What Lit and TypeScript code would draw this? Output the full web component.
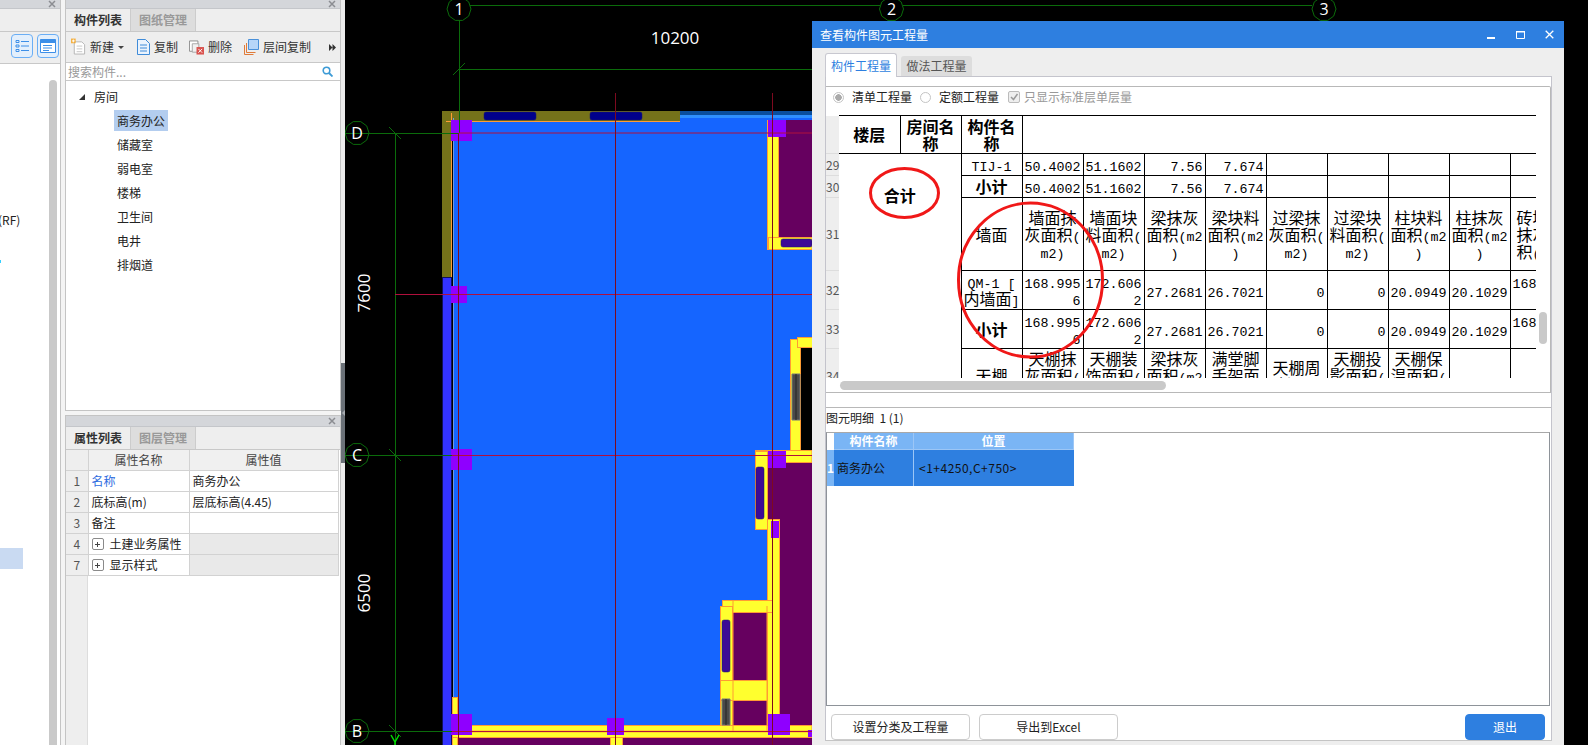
import { LitElement, css, html, svg } from 'lit';
import { customElement } from 'lit/decorators.js';

// ascii runs get the narrow mono face, the way the old grid control draws them
const mixed = (s: string) =>
  s.split(/([\x20-\x7e]+)/).map((p, i) => (i % 2 ? html`<span class="a">${p}</span>` : p));

type Row = { no: number; h: number; cells: string[]; bold?: boolean };

const ROWS: Row[] = [
  { no: 29, h: 22, cells: ['TIJ-1', '50.4002', '51.1602', '7.56', '7.674', '', '', '', '', ''] },
  { no: 30, h: 22, bold: true, cells: ['小计', '50.4002', '51.1602', '7.56', '7.674', '', '', '', '', ''] },
  { no: 31, h: 73, cells: ['墙面', '墙面抹灰面积(m2)', '墙面块料面积(m2)', '梁抹灰面积(m2)', '梁块料面积(m2)', '过梁抹灰面积(m2)', '过梁块料面积(m2)', '柱块料面积(m2)', '柱抹灰面积(m2)', '砖墙面抹灰面积(m2)'] },
  { no: 32, h: 39, cells: ['QM-1 [内墙面]', '168.9956', '172.6062', '27.2681', '26.7021', '0', '0', '20.0949', '20.1029', '168.9956'] },
  { no: 33, h: 39, bold: true, cells: ['小计', '168.9956', '172.6062', '27.2681', '26.7021', '0', '0', '20.0949', '20.1029', '168.9956'] },
  { no: 34, h: 54, cells: ['天棚', '天棚抹灰面积(m2)', '天棚装饰面积(m2)', '梁抹灰面积(m2)', '满堂脚手架面积(m2)', '天棚周长(m)', '天棚投影面积(m2)', '天棚保温面积(m2)', '', ''] },
];

const ATTRS = [
  { no: 1, name: '名称', value: '商务办公', blue: true },
  { no: 2, name: '底标高(m)', value: '层底标高(4.45)' },
  { no: 3, name: '备注', value: '' },
  { no: 4, name: '土建业务属性', value: '', group: true },
  { no: 7, name: '显示样式', value: '', group: true },
];

const TREE = ['商务办公', '储藏室', '弱电室', '楼梯', '卫生间', '电井', '排烟道'];

// x, y, w, h, fill for the plan drawing
const PURPLE = '#66005f';
const YELLOW = '#ffff2e';
const ORANGE = '#ff9c33';
const COLUMN = '#8f00ff';
const WINDOW = '#3c0a96';

const FILLS: [number, number, number, number, string][] = [
  [453, 118, 359, 607, '#1565ff'],
  [778, 120, 34, 117, PURPLE],
  [767, 462, 45, 58, PURPLE],
  [779, 520, 33, 205, PURPLE],
  [800, 347, 12, 103, '#000'],
  [732, 612, 35, 68, PURPLE],
  [732, 700, 35, 25, PURPLE],
  [457, 737, 153, 8, PURPLE],
  [622, 737, 190, 8, PURPLE],
  [442, 111, 10, 166, '#75721a'],
  [442, 111, 238, 11, '#75721a'],
  [680, 111, 132, 4, '#0a4e9e'],
  [680, 115, 132, 3, '#2f8fff'],
  [451, 113, 1, 164, ORANGE],
  [446, 121, 234, 1, ORANGE],
  [442, 277, 10, 468, '#10105c'],
  [443, 278, 8, 467, '#3333ff'],
  [453, 118, 1, 600, '#6f9be0'],
];

const WALLS: [number, number, number, number][] = [
  [767.5, 120.5, 11, 129],
  [768.5, 237.5, 43.5, 12],
  [790.5, 339.5, 10, 111],
  [797.5, 337.5, 15, 10],
  [755.5, 450.5, 56.5, 12],
  [755.5, 451.5, 12, 78],
  [767.5, 519.5, 12, 212],
  [722.5, 600.5, 50, 12],
  [720.5, 606.5, 12, 125],
  [720.5, 680.5, 47, 20],
  [452.5, 725.5, 359.5, 12],
  [452.5, 697.5, 5, 28],
  [452.5, 737.5, 5, 8],
  [610.5, 737.5, 12, 8],
];

const DARK: [number, number, number, number, string][] = [
  [484, 112, 52, 8, '#00008b'],
  [590, 112, 52, 8, '#00008b'],
  [781, 239, 31, 8, WINDOW],
  [756, 467, 8, 52, WINDOW],
  [722, 620, 8, 52, WINDOW],
];

const COLUMNS: [number, number, number, number][] = [
  [451, 120, 21, 21],
  [768, 120, 18, 17],
  [451, 286, 16, 17],
  [451, 449, 21, 21],
  [768, 451, 18, 17],
  [771, 521, 8, 17],
  [451, 714, 21, 21],
  [607, 718, 17, 17],
  [768, 714, 22, 21],
  [808, 730, 4, 7],
];

const AXES = [
  { x: 459, y: 9, t: '1' },
  { x: 891.5, y: 9, t: '2' },
  { x: 1324, y: 9, t: '3' },
  { x: 357, y: 133, t: 'D' },
  { x: 357, y: 455, t: 'C' },
  { x: 357, y: 731, t: 'B' },
];

const octagon = (cx: number, cy: number, r: number) =>
  Array.from({ length: 10 }, (_, i) => {
    const a = (Math.PI * 2 * i) / 10;
    return `${(cx + r * Math.cos(a)).toFixed(1)},${(cy + r * Math.sin(a)).toFixed(1)}`;
  }).join(' ');

const closeIcon = html`<svg class="x" width="8" height="8" viewBox="0 0 8 8"><path d="M1 1l6 6M7 1L1 7" stroke="#8b8d92" stroke-width="1.5" fill="none"/></svg>`;

const iconNew = html`<svg width="15" height="18" viewBox="0 0 16 18"><path d="M3.5 3.5h8l3 3v10h-11z" fill="#fff" stroke="#b4b4b4"/><path d="M6 8h6M6 11h6M6 14h6" stroke="#c4c4c4"/><path d="M0 0h5v5H0z" fill="#f5a623" opacity=".85"/><path d="M1 2.5h3M2.5 1v3" stroke="#fff"/></svg>`;
const iconCopy = html`<svg width="14" height="16" viewBox="0 0 14 16"><path d="M1.5.5h8l4 4v11h-12z" fill="#eaf3fd" stroke="#3f8bd8"/><path d="M4 6h7M4 9h7M4 12h7" stroke="#3f8bd8"/></svg>`;
const iconDelete = html`<svg width="15" height="15" viewBox="0 0 16 15"><path d="M.5.5h9v11H.5z" fill="#fff" stroke="#8d8d8d"/><path d="M3.5 3.5h7v9h-7z" fill="#f1f1f1" stroke="#a5a5a5"/><path d="M8 7h8v8H8z" fill="#d9534f"/><path d="M10 9l4 4M14 9l-4 4" stroke="#fff"/></svg>`;
const iconFloors = html`<svg width="15" height="16" viewBox="0 0 15 16"><path d="M.5 6v9.5h9M2.500 4v9.500h9" fill="none" stroke="#e07b39"/><path d="M4.500.5h10v10h-10z" fill="#b6d5f8" stroke="#4a90d9"/></svg>`;
const iconSearch = html`<svg width="11" height="11" viewBox="0 0 11 11"><circle cx="4.500" cy="4.500" r="3.300" fill="none" stroke="#3d9bd6" stroke-width="1.600"/><path d="M7 7l3.500 3.500" stroke="#3d9bd6" stroke-width="1.800"/></svg>`;

@customElement('app-root')
export class AppRoot extends LitElement {
  static styles = css`
    :host {
      display: flex;
      position: relative;
      width: 1588px;
      height: 745px;
      overflow: hidden;
      background: #f4f4f4;
      font: 12px/16px "Noto Sans CJK SC", sans-serif;
      color: #222;
    }

    /* left stub panel, cut by the window edge */
    .left {
      width: 61px;
      flex: none;
      box-sizing: border-box;
      border-right: 1px solid #c4c4c4;
      background: #fff;
      display: flex;
      flex-direction: column;
    }
    .title {
      height: 8px;
      flex: none;
      background: #d4d6da;
      border-bottom: 1px solid #c4c6ca;
      display: flex;
      justify-content: flex-end;
      align-items: center;
      padding-right: 4px;
    }
    .left .strip {
      height: 22px;
      background: #eee;
      border-bottom: 1px solid #c8c8c8;
    }
    .left .tools {
      height: 29px;
      background: #eee;
      border-bottom: 1px solid #c8c8c8;
      display: flex;
      gap: 4px;
      padding: 2px 0 0 11px;
      box-sizing: content-box;
    }
    .viewbtn {
      width: 20px;
      height: 22px;
      border: 1px solid #6aaef5;
      border-radius: 4px;
      background: #e3effc;
      display: flex;
      align-items: center;
      justify-content: center;
    }
    .left .body {
      flex: 1;
      position: relative;
      display: flex;
      min-height: 0;
    }
    .left .content {
      width: 49px;
      overflow: hidden;
    }
    .rf {
      margin: 148px 0 0 -2px;
      white-space: nowrap;
    }
    .mark {
      width: 1px;
      height: 3px;
      margin-top: 32px;
      background: #35d0ff;
    }
    .picked {
      width: 23px;
      height: 21px;
      margin-top: 285px;
      background: #c9daf2;
    }
    .left .thumb {
      width: 8px;
      margin-top: 16px;
      background: #c9c9c9;
      border-radius: 4px 4px 0 0;
    }

    .mid {
      width: 276px;
      flex: none;
      margin-left: 4px;
      display: flex;
      flex-direction: column;
      gap: 4px;
    }
    .panel {
      box-sizing: border-box;
      border: 1px solid #c4c4c4;
      border-top: none;
      background: #fff;
      display: flex;
      flex-direction: column;
      min-height: 0;
    }
    .panel.list {
      height: 411px;
    }
    .panel.attrs {
      flex: 1;
      border-top: 1px solid #c4c4c4;
      border-bottom: none;
    }
    .panel.attrs .title {
      height: 10px;
    }
    .tabs {
      height: 22px;
      flex: none;
      display: flex;
      background: #eee;
      border-bottom: 1px solid #c8c8c8;
    }
    .tab {
      width: 64px;
      display: flex;
      align-items: center;
      justify-content: center;
      font-weight: 700;
      color: #333;
    }
    .tab.off {
      width: 64px;
      background: #ddd;
      color: #999;
      border: 1px solid #ccc;
      border-width: 0 1px;
    }
    .toolbar {
      height: 30px;
      flex: none;
      display: flex;
      align-items: center;
      background: #eee;
      border-bottom: 1px solid #c8c8c8;
      padding-left: 5px;
      color: #333;
    }
    .tool {
      display: flex;
      align-items: center;
      gap: 4px;
      margin-right: 11px;
      white-space: nowrap;
    }
    .tool.wide {
      margin-right: 12px;
    }
    .caret {
      width: 0;
      height: 0;
      border: 3px solid transparent;
      border-top: 3px solid #444;
      border-bottom: none;
    }
    .more {
      margin-left: auto;
      margin-right: 4px;
      display: flex;
    }
    .search {
      height: 17px;
      flex: none;
      display: flex;
      align-items: center;
      justify-content: space-between;
      padding: 0 7px 0 2px;
      color: #999;
      border-bottom: 1px solid #c8c8c8;
    }
    .tree {
      padding: 3px 0 0 13px;
    }
    .tree .root {
      display: flex;
      align-items: center;
      gap: 9px;
      height: 22px;
      padding-top: 2px;
      color: #222;
    }
    .tree .tri {
      width: 0;
      height: 0;
      border-bottom: 6px solid #333;
      border-left: 6px solid transparent;
    }
    .tree .item {
      height: 24px;
      display: flex;
      align-items: center;
      margin-left: 35px;
    }
    .tree .item span {
      padding: 2px 3px;
      line-height: 17px;
    }
    .tree .item.sel span {
      background: #b3cdef;
    }

    .attr-body {
      flex: 1;
      display: flex;
      flex-direction: column;
      min-height: 0;
    }
    .attr-table {
      border-collapse: collapse;
      table-layout: fixed;
      width: 272px;
      color: #222;
    }
    .attr-table th,
    .attr-table td {
      height: 20px;
      padding: 0 3px;
      border: 1px solid #d2d2d2;
      font-weight: 400;
      white-space: nowrap;
      overflow: hidden;
    }
    .attr-table th {
      background: #f0f0f0;
      color: #444;
      text-align: center;
      border-top: none;
    }
    .attr-table .no {
      background: #eee;
      color: #555;
      text-align: center;
      border-left: none;
    }
    .attr-table .blue {
      color: #2e6ce0;
    }
    .attr-table .grey {
      background: #e9e9e9;
    }
    .group {
      display: flex;
      align-items: center;
      gap: 6px;
    }
    .plus {
      width: 10px;
      height: 10px;
      flex: none;
      border: 1px solid #8a8a8a;
      border-radius: 2px;
      background: linear-gradient(#444, #444) center / 5px 1px no-repeat,
        linear-gradient(#444, #444) center / 1px 5px no-repeat;
    }
    .attr-stub {
      flex: 1;
      width: 21px;
      background: #eee;
      border-right: 1px solid #ddd;
    }

    .splitter {
      width: 4px;
      flex: none;
      background: #ececec;
    }
    .handle {
      height: 100px;
      margin-top: 363px;
      background: #6b7178;
      display: flex;
      align-items: center;
      justify-content: center;
    }
    .handle i {
      width: 0;
      height: 0;
      border: 3px solid transparent;
      border-right: 3px solid #a7abb0;
      border-left: none;
    }

    .canvas {
      flex: 1;
      background: #000;
      min-width: 0;
    }
    .canvas svg {
      display: block;
    }
    .canvas text {
      fill: #fff;
      font-family: "Open Sans", sans-serif;
    }

    /* floating dialog */
    .dialog {
      position: absolute;
      left: 812px;
      top: 21px;
      width: 752px;
      height: 724px;
      background: #eee;
      display: flex;
      flex-direction: column;
    }
    .dlg-title {
      height: 27px;
      flex: none;
      background: #2e7fe0;
      color: #fff;
      display: flex;
      align-items: center;
      padding: 0 10px 0 8px;
    }
    .dlg-title .win {
      margin-left: auto;
      display: flex;
      gap: 20px;
    }
    .dlg-tabs {
      height: 28px;
      flex: none;
      display: flex;
      align-items: flex-end;
      gap: 4px;
      padding-left: 13px;
      position: relative;
      z-index: 1;
    }
    .dlg-tab {
      width: 72px;
      height: 24px;
      box-sizing: border-box;
      background: #fff;
      border: 1px solid #c8c8d0;
      border-bottom: none;
      border-radius: 3px 3px 0 0;
      color: #2e7fe0;
      display: flex;
      align-items: center;
      justify-content: center;
      margin-bottom: -1px;
    }
    .dlg-tab.off {
      width: 71px;
      height: 20px;
      background: #ddd;
      border: none;
      color: #555;
      margin-bottom: 0;
    }
    .pane {
      height: 665px;
      box-sizing: border-box;
      margin: 0 12px 0 13px;
      background: #fff;
      border: 1px solid #c4c4cc;
      border-bottom: 1px solid #c4c4c4;
      padding: 9px 0 0;
      display: flex;
      flex-direction: column;
    }
    .frame {
      height: 307px;
      flex: none;
      box-sizing: border-box;
      border: 1px solid #b8b8b8;
      border-width: 1px 1px 1px 0;
      border-radius: 0 2px 0 0;
      position: relative;
    }
    .options {
      height: 20px;
      margin-bottom: 8px;
      display: flex;
      align-items: center;
      padding-left: 7px;
    }
    .radio {
      width: 11px;
      height: 11px;
      box-sizing: border-box;
      border: 1px solid #c4c4c4;
      border-radius: 50%;
      background: #fff;
      margin-right: 8px;
    }
    .radio.on {
      background: radial-gradient(circle, #aaa 0 3px, #fff 3.500px);
    }
    .opt {
      margin-right: 8px;
    }
    .check {
      width: 12px;
      height: 12px;
      box-sizing: border-box;
      border: 1px solid #bbb;
      border-radius: 2px;
      background: #eee;
      margin: 0 4px 0 1px;
      display: flex;
    }
    .opt.dim {
      color: #999;
    }
    .sheet-clip {
      width: 710px;
      height: 263px;
      overflow: hidden;
    }
    .sheet {
      border-collapse: collapse;
      table-layout: fixed;
      width: 745px;
      color: #000;
      font-size: 16px;
      line-height: 17px;
    }
    .sheet td {
      border: 1px solid #000;
      padding: 0 2px;
      word-break: break-all;
      line-break: anywhere;
      text-align: center;
      vertical-align: middle;
      overflow: hidden;
    }
    /* small line-height so the mono runs don't push the 17px line boxes apart */
    .sheet .a {
      font: 13.333px/10px "Liberation Mono", monospace;
      white-space: pre-wrap;
    }
    .sheet td.num {
      text-align: right;
    }
    .sheet td.b {
      font-weight: 700;
    }
    .sheet td.first {
      border-left: none;
    }
    .sheet td.total {
      vertical-align: top;
      padding-top: 33px;
      font-weight: 700;
      border-left: none;
    }
    .sheet td.rn {
      padding: 0;
      border: none;
      border-bottom: 1px solid #ddd;
      background: #eee;
      font: 12px/16px "Noto Sans CJK SC", sans-serif;
      color: #555;
      white-space: nowrap;
      word-break: normal;
      text-align: left;
      overflow: visible;
    }
    .hbar {
      position: absolute;
      left: 14px;
      top: 294px;
      width: 326px;
      height: 9px;
      border-radius: 5px;
      background: #c9c9c9;
    }
    .vbar {
      position: absolute;
      left: 713px;
      top: 225px;
      width: 8px;
      height: 32px;
      border-radius: 4px;
      background: #c9c9c9;
    }
    .rings {
      position: absolute;
      left: 0;
      top: 0;
      pointer-events: none;
    }
    .detail {
      flex: 1;
      margin-top: 14px;
      display: flex;
      flex-direction: column;
      border-top: 1px solid #b8b8b8;
      min-height: 0;
    }
    .detail .cap {
      height: 19px;
      padding-bottom: 5px;
      flex: none;
      display: flex;
      align-items: center;
      color: #222;
    }
    .detail .box {
      flex: 1;
      margin-right: 1px;
      border: 1px solid #8e9399;
      border-top-color: #a8a8a8;
    }
    .items {
      display: grid;
      grid-template-columns: 7px 80px 160px;
      grid-template-rows: 17px 36px;
      width: 247px;
      gap: 0;
    }
    .items div {
      display: flex;
      align-items: center;
      box-sizing: border-box;
      border-right: 1px solid #9cc6f6;
    }
    .items .head {
      background: #7ab5f5;
      color: #fff;
      font-weight: 700;
      justify-content: center;
      border-bottom: 1px solid #9cc6f6;
    }
    .items .corner {
      background: #fff;
      border-right: none;
    }
    .items .rownum {
      background: #7ab5f5;
      color: #fff;
      font-weight: 700;
      justify-content: center;
      border-right: none;
    }
    .items .cell {
      background: #2e7fe0;
      color: #111;
      padding-left: 3px;
    }
    .items .cell.pos {
      padding-left: 5px;
      letter-spacing: 0.5px;
      border-right: none;
    }
    .actions {
      height: 34px;
      flex: none;
      box-sizing: border-box;
      padding: 8px 6px 0 5px;
      display: flex;
      gap: 9px;
    }
    .btn {
      width: 139px;
      box-sizing: border-box;
      border: 1px solid #ccc;
      border-radius: 4px;
      background: #fff;
      color: #222;
      display: flex;
      align-items: center;
      justify-content: center;
    }
    .btn.primary {
      width: 80px;
      margin-left: auto;
      background: #2e7fe0;
      border-color: #2e7fe0;
      color: #fff;
    }
  `;

  private renderLeft() {
    return html`
      <div class="left">
        <div class="title">${closeIcon}</div>
        <div class="strip"></div>
        <div class="tools">
          <div class="viewbtn">
            <svg width="14" height="14" viewBox="0 0 14 14"><path d="M1 1.500h3v2H1zM1 6h3v2H1zM1 10.500h3v2H1z" fill="none" stroke="#3d8fe8"/><path d="M6 2.500h8M6 7h8M6 11.500h8" stroke="#3d8fe8"/></svg>
          </div>
          <div class="viewbtn">
            <svg width="16" height="14" viewBox="0 0 16 14"><path d="M.5.5h15v13H.5z" fill="#fff" stroke="#3d8fe8"/><path d="M.5.500h15v3.500H.5z" fill="#3d8fe8"/><path d="M3 6.500h9M3 9h9M3 11.500h6" stroke="#3d8fe8"/></svg>
          </div>
        </div>
        <div class="body">
          <div class="content">
            <div class="rf">(RF)</div>
            <div class="mark"></div>
            <div class="picked"></div>
          </div>
          <div class="thumb"></div>
        </div>
      </div>
    `;
  }

  private renderList() {
    return html`
      <section class="panel list">
        <div class="title">${closeIcon}</div>
        <div class="tabs"><div class="tab">构件列表</div><div class="tab off">图纸管理</div></div>
        <div class="toolbar">
          <div class="tool wide">${iconNew}<span>新建</span><i class="caret"></i></div>
          <div class="tool">${iconCopy}<span>复制</span></div>
          <div class="tool wide">${iconDelete}<span>删除</span></div>
          <div class="tool">${iconFloors}<span>层间复制</span></div>
          <span class="more">
            <svg width="7" height="7" viewBox="0 0 7 7"><path d="M0 0l3.500 3.500L0 7zM3.500 0L7 3.500 3.500 7z" fill="#333"/></svg>
          </span>
        </div>
        <div class="search"><span>搜索构件...</span>${iconSearch}</div>
        <div class="tree">
          <div class="root"><i class="tri"></i><span>房间</span></div>
          ${TREE.map((t, i) => html`<div class="item ${i === 0 ? 'sel' : ''}"><span>${t}</span></div>`)}
        </div>
      </section>
    `;
  }

  private renderAttrs() {
    return html`
      <section class="panel attrs">
        <div class="title">${closeIcon}</div>
        <div class="tabs"><div class="tab">属性列表</div><div class="tab off">图层管理</div></div>
        <div class="attr-body">
          <table class="attr-table">
            <colgroup><col width="22" /><col width="101" /><col width="149" /></colgroup>
            <tr><th class="no"></th><th>属性名称</th><th>属性值</th></tr>
            ${ATTRS.map(
              (a) => html`
                <tr>
                  <td class="no">${a.no}</td>
                  <td class=${a.blue ? 'blue' : ''}>
                    ${a.group
                      ? html`<div class="group"><i class="plus"></i><span>${a.name}</span></div>`
                      : a.name}
                  </td>
                  <td class=${a.group ? 'grey' : ''}>${a.value}</td>
                </tr>
              `
            )}
          </table>
          <div class="attr-stub"></div>
        </div>
      </section>
    `;
  }

  private renderPlan() {
    const green = '#0b6b0b';
    return html`
      <div class="canvas">
        <svg width="1243" height="745" viewBox="345 0 1243 745">
          ${FILLS.map(([x, y, w, h, f]) => svg`<rect x=${x} y=${y} width=${w} height=${h} fill=${f}></rect>`)}
          ${WALLS.map(([x, y, w, h]) => svg`<rect x=${x} y=${y} width=${w} height=${h} fill=${YELLOW} stroke=${ORANGE}></rect>`)}
          <path d="M453 731.500H812" stroke="#ff6a1e" stroke-width="1.500" fill="none" />
          <path d="M733 600v131M767 606v125" stroke=${ORANGE} fill="none" />
          ${DARK.map(([x, y, w, h, f]) => svg`<rect x=${x} y=${y} width=${w} height=${h} rx="2" fill=${f} stroke="#1a1a6a" stroke-width=".5"></rect>`)}
          <path d="M792 374h8v46h-8zM722 699h8v26h-8z" fill="#4a4a4a" stroke="#777" />
          <path d="M796 374v46M726 699v26" stroke="#222" />
          ${COLUMNS.map(([x, y, w, h]) => svg`<rect x=${x} y=${y} width=${w} height=${h} fill=${COLUMN}></rect>`)}

          <path d="M459.500 20V133M470 5.500H880M903 5.500H1312M459 69.500H812M345 133.500H459M345 455.500H452M345 731.500H452M395.500 133V745" stroke=${green} fill="none" />
          <path d="M453 75l12-12M389 127l12 12M389 449l12 12M389 725l12 12" stroke=${green} fill="none" />
          <path d="M391 735l4 7 4-7M395 742v3" stroke="#00e000" stroke-width="1.500" fill="none" />
          <path d="M459 133H812M395 294.500H812M452 455.500H812M452 731.500H812" stroke="#b0103c" fill="none" />
          <path d="M458.500 133V745M615.500 93V745M772.500 93V745" stroke="#7d0a1f" fill="none" />

          ${AXES.map(
            (a) => svg`
              <polygon points=${octagon(a.x, a.y, 12)} fill="none" stroke=${green}></polygon>
              <text x=${a.x} y=${a.y + 6} font-size="16" text-anchor="middle">${a.t}</text>
            `
          )}
          <text x="675" y="44" font-size="17" text-anchor="middle">10200</text>
          <text transform="translate(370 293) rotate(-90)" font-size="17" text-anchor="middle">7600</text>
          <text transform="translate(370 593) rotate(-90)" font-size="17" text-anchor="middle">6500</text>
        </svg>
      </div>
    `;
  }

  private renderSheet() {
    return html`
      <table class="sheet">
        <colgroup>
          <col width="13" />
          ${Array.from({ length: 12 }, () => html`<col width="61" />`)}
        </colgroup>
        <tr style="height:38px">
          <td class="rn"></td>
          <td class="b first">楼层</td>
          <td class="b">房间名称</td>
          <td class="b">构件名称</td>
          <td colspan="9"></td>
        </tr>
        ${ROWS.map(
          (r, i) => html`
            <tr style="height:${r.h}px">
              <td class="rn">${r.no}</td>
              ${i === 0 ? html`<td class="total" colspan="2" rowspan="6">合计</td>` : ''}
              ${r.cells.map((c, j) => {
                const isNum = /^[\d.]+$/.test(c);
                return html`<td class="${isNum ? 'num' : ''} ${r.bold && j === 0 ? 'b' : ''}">${mixed(c)}</td>`;
              })}
            </tr>
          `
        )}
      </table>
    `;
  }

  private renderDialog() {
    return html`
      <div class="dialog">
        <div class="dlg-title">
          <span>查看构件图元工程量</span>
          <div class="win">
            <svg width="9" height="9" viewBox="0 0 9 9"><path d="M0 7h8v2H0z" fill="#fff"/></svg>
            <svg width="9" height="9" viewBox="0 0 9 9"><path d="M.5 1.500h8v7h-8z" fill="none" stroke="#fff"/><path d="M0 1h9v1.500H0z" fill="#fff"/></svg>
            <svg width="9" height="9" viewBox="0 0 9 9"><path d="M.7.700l7.600 7.600M8.300.700L.7 8.300" stroke="#fff" stroke-width="1.300" fill="none"/></svg>
          </div>
        </div>
        <div class="dlg-tabs">
          <div class="dlg-tab">构件工程量</div>
          <div class="dlg-tab off">做法工程量</div>
        </div>
        <div class="pane">
          <div class="frame">
            <div class="options">
              <i class="radio on"></i><span class="opt">清单工程量</span>
              <i class="radio"></i><span class="opt">定额工程量</span>
              <i class="check">
                <svg width="10" height="10" viewBox="0 0 10 10"><path d="M2 5l2.500 2.500L8.500 2" stroke="#999" stroke-width="1.500" fill="none"/></svg>
              </i>
              <span class="opt dim">只显示标准层单层量</span>
            </div>
            <div class="sheet-clip">${this.renderSheet()}</div>
            <i class="hbar"></i>
            <i class="vbar"></i>
            <svg class="rings" width="300" height="290" viewBox="0 0 300 290">
              <ellipse cx="78.500" cy="106" rx="34" ry="24.500" fill="none" stroke="#f01818" stroke-width="3" />
              <ellipse cx="204.500" cy="193" rx="72" ry="77" fill="none" stroke="#f01818" stroke-width="3" />
            </svg>
          </div>
          <div class="detail">
            <div class="cap">图元明细&nbsp;&nbsp;1 (1)</div>
            <div class="box">
              <div class="items">
                <div class="corner"></div>
                <div class="head">构件名称</div>
                <div class="head">位置</div>
                <div class="rownum">1</div>
                <div class="cell">商务办公</div>
                <div class="cell pos">&lt;1+4250,C+750&gt;</div>
              </div>
            </div>
          </div>
          <div class="actions">
            <div class="btn">设置分类及工程量</div>
            <div class="btn">导出到Excel</div>
            <div class="btn primary">退出</div>
          </div>
        </div>
      </div>
    `;
  }

  render() {
    return html`
      ${this.renderLeft()}
      <div class="mid">${this.renderList()}${this.renderAttrs()}</div>
      <div class="splitter"><div class="handle"><i></i></div></div>
      ${this.renderPlan()}
      ${this.renderDialog()}
    `;
  }
}
